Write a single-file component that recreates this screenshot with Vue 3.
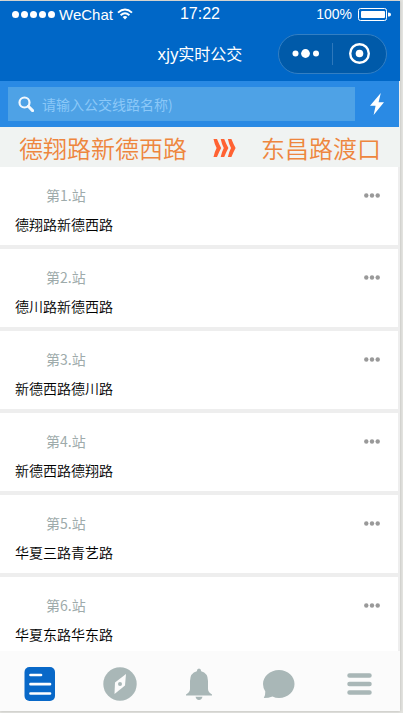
<script setup>
import { ref } from 'vue'

const keyword = ref('')
const stops = [
  '德翔路新德西路',
  '德川路新德西路',
  '新德西路德川路',
  '新德西路德翔路',
  '华夏三路青艺路',
  '华夏东路华东路',
]
</script>

<template>
  <div class="shell">
    <div class="phone">
      <header class="top">
        <div class="status">
          <div class="carrier">
            <svg class="signal" viewBox="0 0 43 7" aria-hidden="true">
              <circle v-for="n in 5" :key="n" :cx="n * 9 - 5.5" cy="3.5" r="3.5" fill="#fff" />
            </svg>
            <span>WeChat</span>
            <svg class="wifi" viewBox="0 0 16 12" fill="none" stroke="#fff" stroke-width="1.9" aria-hidden="true">
              <path d="M1 4.6Q8-1.8 15 4.6M3.6 7.3Q8 3.2 12.4 7.3" />
              <path d="M5.6 9Q8 7 10.4 9L8 11.6Z" fill="#fff" stroke="none" />
            </svg>
          </div>
          <span class="clock">17:22</span>
          <div class="power">
            <span>100%</span>
            <svg class="battery" viewBox="0 0 34 13" aria-hidden="true">
              <rect x=".5" y=".5" width="28" height="12" rx="2" fill="none" stroke="#fff" />
              <rect x="3" y="3" width="24" height="7" rx="1" fill="#fff" />
              <path d="M30 4.5Q33 4.5 33 6.5T30 8.5Z" fill="#fff" />
            </svg>
          </div>
        </div>
        <div class="nav">
          <h1>xjy实时公交</h1>
          <div class="capsule">
            <button type="button" aria-label="更多">
              <svg width="28" height="10" viewBox="0 0 28 10" fill="#fff">
                <circle cx="3.500" cy="4.500" r="3" /><circle cx="13.500" cy="4.500" r="4.400" /><circle cx="24" cy="4.500" r="3" />
              </svg>
            </button>
            <button type="button" aria-label="关闭">
              <svg width="22" height="22" viewBox="0 0 22 22">
                <circle cx="10.500" cy="10.500" r="9.300" fill="none" stroke="#fff" stroke-width="2.400" />
                <circle cx="10.500" cy="10.500" r="3.800" fill="#fff" />
              </svg>
            </button>
          </div>
        </div>
      </header>

      <form class="search" @submit.prevent>
        <label class="field">
          <svg width="16" height="16" viewBox="0 0 16 16" fill="none" stroke="#f2f8fd" aria-hidden="true">
            <circle cx="6.500" cy="6.500" r="5" stroke-width="2.200" />
            <path d="M10.300 10.300L14.600 14.600" stroke-width="3" stroke-linecap="round" />
          </svg>
          <input v-model="keyword" type="text" placeholder="请输入公交线路名称)" aria-label="公交线路名称">
        </label>
        <button type="submit" aria-label="搜索">
          <svg width="14" height="22" viewBox="0 0 14 22" fill="#fff">
            <path d="M10.800 0L0 12.800H5.600L3.600 22L14 9.200H8.600Z" />
          </svg>
        </button>
      </form>

      <div class="route">
        <span>德翔路新德西路</span>
        <svg width="23" height="18" viewBox="0 0 23 18" fill="#ff6233" aria-hidden="true">
          <path v-for="n in 3" :key="n" :transform="`translate(${(n - 1) * 7.2} 0)`" d="M.5 0H4Q6 5 8.200 9Q6 13 4 18H.5Q1.500 13 3.600 9Q1.500 5 .5 0Z" />
        </svg>
        <span>东昌路渡口</span>
      </div>

      <main class="list">
        <section v-for="(stop, i) in stops" :key="i" class="stop">
          <div class="head">
            <span>第{{ i + 1 }}.站</span>
            <button type="button" aria-label="更多">
              <svg width="16" height="5" viewBox="0 0 16 5" fill="#999">
                <circle cx="2.300" cy="2.500" r="2.200" /><circle cx="8" cy="2.500" r="2.200" /><circle cx="13.700" cy="2.500" r="2.200" />
              </svg>
            </button>
          </div>
          <p>{{ stop }}</p>
        </section>
      </main>

      <nav class="tabs">
        <a href="#lines" aria-label="线路">
          <svg width="34" height="34" viewBox="0 0 34 34">
            <rect x="1.500" y="0" width="30.500" height="34" rx="5" fill="#0868c8" />
            <path d="M7.500 8H18M7.500 17.200H27M7.500 26.500H27" stroke="#fff" stroke-width="2.700" stroke-linecap="round" />
          </svg>
        </a>
        <a href="#explore" aria-label="发现">
          <svg width="34" height="34" viewBox="0 0 34 34">
            <circle cx="17" cy="17" r="16.700" fill="#a9b7b7" />
            <path d="M23 7L22 18.500L11.500 27L12 15.500Z" fill="#fbfbfb" />
            <circle cx="17" cy="17" r="2" fill="#a9b7b7" />
          </svg>
        </a>
        <a href="#alerts" aria-label="提醒">
          <svg width="34" height="34" viewBox="0 0 34 34" fill="#a9b7b7">
            <path d="M17 1.500Q19 1.500 19.200 4.200Q26 6 26 14V22Q26 25 30 27.500V28.500H4V27.500Q8 25 8 22V14Q8 6 14.800 4.200Q15 1.500 17 1.500ZM13.500 29.800H20.500Q19.500 33 17 33T13.500 29.800Z" />
          </svg>
        </a>
        <a href="#messages" aria-label="消息">
          <svg width="34" height="34" viewBox="0 0 34 34" fill="#a9b7b7">
            <path d="M17 3C26 3 32.500 9.500 32.500 17S26 31 17 31Q13.500 31 10.500 29.500Q6.500 31 1.800 31Q3.500 28 3.300 24.500Q1 21 1 17C1 9.500 8 3 17 3Z" />
          </svg>
        </a>
        <a href="#menu" aria-label="菜单">
          <svg width="34" height="34" viewBox="0 0 34 34" stroke="#a9b7b7" stroke-width="4.500" stroke-linecap="round">
            <path d="M7.500 8.500H27.500M7.500 17H27.500M7.500 25.500H27.500" />
          </svg>
        </a>
      </nav>
    </div>
  </div>
</template>

<style>
body { background: #e4e4e0; }
</style>

<style scoped>
* { box-sizing: border-box; }
.shell {
  height: 100vh;
  padding: 1px 3px 2px 0;
  font-family: "Liberation Sans", "Noto Sans CJK SC", sans-serif;
}
.phone {
  height: 100%;
  display: flex;
  flex-direction: column;
  background: #eee;
  box-shadow: 0 0 3px rgba(0, 0, 0, .2);
}
svg { display: block; flex: none; }
button { padding: 0; border: 0; background: none; cursor: pointer; }
.top { background: #0067c7; color: #fff; }
.status {
  display: grid;
  grid-template-columns: 1fr auto 1fr;
  align-items: center;
  height: 26px;
  padding: 0 8px;
}
.carrier, .power { display: flex; align-items: center; gap: 4px; font-size: 15px; }
.carrier { padding-left: 4px; }
.power { justify-content: flex-end; gap: 6px; font-size: 14px; }
.signal { width: 43px; height: 7px; }
.wifi { width: 16px; height: 12px; }
.battery { width: 34px; height: 13px; }
.clock { font-size: 16px; }
.nav {
  display: grid;
  grid-template-columns: 1fr auto 1fr;
  align-items: center;
  height: 54px;
  padding: 0 13px;
}
h1 {
  grid-column: 2;
  margin: 0;
  font: 400 16px/24px "Noto Sans", "Noto Sans CJK SC", sans-serif;
}
.capsule {
  justify-self: end;
  display: flex;
  align-items: center;
  width: 109px;
  height: 40px;
  border: 1px solid #337fc3;
  border-radius: 20px;
  background: #005aa9;
}
.capsule button {
  flex: 1;
  display: flex;
  justify-content: center;
  align-items: center;
  height: 22px;
}
.capsule button + button { border-left: 1px solid #2e78bb; }
.search {
  display: flex;
  height: 46px;
  margin-right: 1px;
  padding: 6px 0 6px 8px;
  background: #2a8ae4;
}
.search > button {
  width: 44px;
  display: flex;
  align-items: center;
  justify-content: center;
}
.field {
  flex: 1;
  display: flex;
  align-items: center;
  gap: 8px;
  padding-left: 10px;
  background: #4ea2e6;
}
input {
  flex: 1;
  min-width: 0;
  padding: 0;
  border: 0;
  outline: 0;
  background: none;
  color: #fff;
  font: 400 14px/20px "Noto Sans CJK SC", sans-serif;
}
input::placeholder { color: #8bc8f8; opacity: 1; }
.route {
  display: flex;
  justify-content: space-between;
  align-items: center;
  height: 40px;
  padding: 2px 19px 0;
  background: #f0f3f2;
  color: #ee863e;
  font: 350 24px/38px "Noto Sans CJK SC", sans-serif;
}
.list {
  flex: 1;
  min-height: 0;
  overflow: hidden;
  margin-right: 1px;
  border-right: 1px solid #eee;
}
.stop {
  height: 78px;
  margin-bottom: 4px;
  padding: 18px 18px 0 15px;
  background: #fff;
  font: 350 14px/20px "Noto Sans CJK SC", sans-serif;
}
.head {
  display: flex;
  align-items: center;
  justify-content: space-between;
  height: 20px;
  padding-left: 31px;
  color: #9eabab;
  font-weight: 400;
}
.stop p { margin: 9px 0 0; color: #000; }
.tabs {
  display: flex;
  height: 60px;
  padding-right: 1px;
  background: #fbfbfb;
}
.tabs a {
  flex: 1;
  display: flex;
  align-items: center;
  justify-content: center;
  padding-top: 6px;
}
</style>
